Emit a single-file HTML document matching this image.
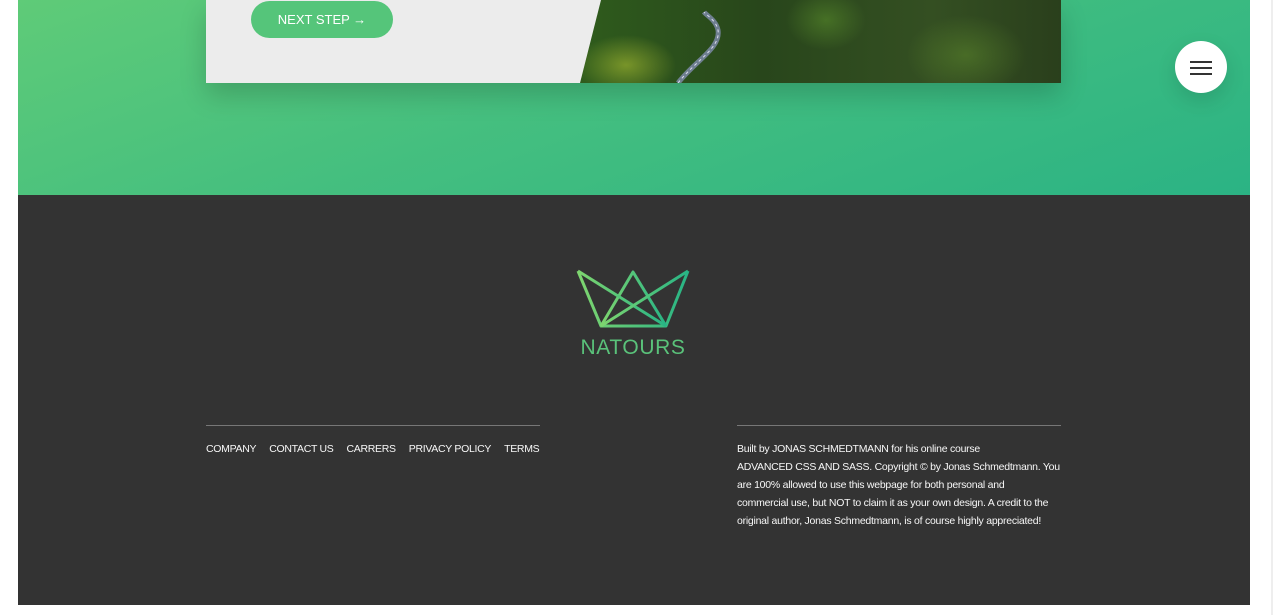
<!DOCTYPE html>
<html><head><meta charset="utf-8"><style>
*{margin:0;padding:0;box-sizing:border-box}
html,body{width:1273px;height:615px;overflow:hidden;background:#fff;font-family:"Liberation Sans",sans-serif}
.hero{position:absolute;left:18px;top:0;width:1232px;height:195px;background:linear-gradient(160deg,#5fcb78 0%,#45bf7f 45%,#2bb384 100%)}
.card{position:absolute;left:206px;top:0;width:855px;height:83px;background:#ececec;box-shadow:0 12px 25px rgba(0,0,0,.18);overflow:hidden}
.forest{position:absolute;left:0;top:0;width:855px;height:83px;clip-path:polygon(395px 0,855px 0,855px 83px,374px 83px);
background:
radial-gradient(ellipse 50px 30px at 420px 65px,rgba(170,190,50,.6) 0%,rgba(120,160,40,0) 100%),
radial-gradient(ellipse 60px 40px at 760px 55px,rgba(95,140,45,.5) 0%,rgba(80,120,40,0) 100%),
radial-gradient(ellipse 40px 30px at 620px 20px,rgba(95,150,45,.5) 0%,rgba(80,120,40,0) 100%),
linear-gradient(90deg,#3e6d20 0%,#4a7a24 20%,#2e5a1c 45%,#28461b 65%,#344f22 85%,#2a3f1c 100%)}
.road{position:absolute;left:0;top:0}
.btn{position:absolute;left:45px;top:1px;width:142px;height:37px;border-radius:19px;background:#55c57a;color:#fff;font-size:13px;line-height:37px;text-align:center}
.menu{position:absolute;left:1175px;top:41px;width:52px;height:52px;border-radius:50%;background:#fff;box-shadow:0 8px 20px rgba(0,0,0,.12)}
.menu i{position:absolute;left:15px;width:22px;height:2px;background:#333}
.foot{position:absolute;left:18px;top:195px;width:1232px;height:410px;background:#333}
.logo{position:absolute;left:575px;top:268px}
.nt{position:absolute;left:560px;top:336px;width:146px;text-align:center;font-size:21px;color:#5ac27a;letter-spacing:.6px}
.hr{position:absolute;height:1px;background:#777;top:425px}
.links{position:absolute;left:206px;top:443px;font-size:10.5px;color:#f7f7f7;letter-spacing:-.3px;white-space:nowrap}
.links span{margin-right:13px}
.txt{position:absolute;left:737px;top:440px;font-size:10.5px;line-height:18px;color:#f7f7f7;letter-spacing:-.25px;white-space:nowrap}
.sb{position:absolute;left:1271px;top:0;width:2px;height:615px;background:#eee}
</style></head><body>
<div class="hero"></div>
<div class="card">
<div class="forest"><svg class="road" width="855" height="83"><path d="M472 83 C490 60,515 48,512 30 C510 20,500 15,498 12" stroke="#6f7f90" stroke-width="5" fill="none"/><path d="M472 83 C490 60,515 48,512 30 C510 20,500 15,498 12" stroke="#dde" stroke-width="1" fill="none" stroke-dasharray="3 3"/></svg></div>
<div class="btn">NEXT STEP →</div>
</div>
<div class="menu"><i style="top:20px"></i><i style="top:26px"></i><i style="top:32px"></i></div>
<div class="foot"></div>
<svg class="logo" width="118" height="62"><defs><linearGradient id="g" x1="0" x2="1"><stop offset="0" stop-color="#7ed56f"/><stop offset="1" stop-color="#28b485"/></linearGradient></defs>
<g stroke="url(#g)" stroke-width="3" fill="none" stroke-linejoin="round">
<polyline points="3,3 26,58 91,58 113,3"/><polyline points="26,58 58,4 91,58"/><line x1="3" y1="3" x2="91" y2="58"/><line x1="113" y1="3" x2="26" y2="58"/></g></svg>
<div class="nt">NATOURS</div>
<div class="hr" style="left:206px;width:334px"></div>
<div class="hr" style="left:737px;width:324px"></div>
<div class="links"><span>COMPANY</span><span>CONTACT US</span><span>CARRERS</span><span>PRIVACY POLICY</span><span style="margin:0">TERMS</span></div>
<div class="txt">Built by JONAS SCHMEDTMANN for his online course<br>ADVANCED CSS AND SASS. Copyright © by Jonas Schmedtmann. You<br>are 100% allowed to use this webpage for both personal and<br>commercial use, but NOT to claim it as your own design. A credit to the<br>original author, Jonas Schmedtmann, is of course highly appreciated!</div>
<div class="sb"></div>
</body></html>
